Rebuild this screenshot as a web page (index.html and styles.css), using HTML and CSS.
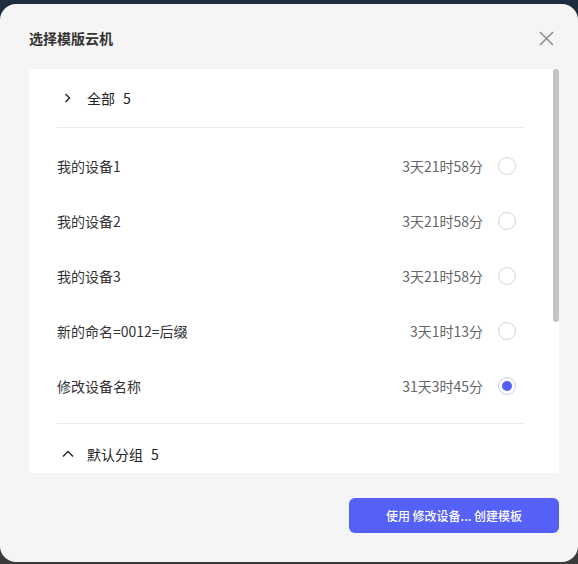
FILE: index.html
```html
<!DOCTYPE html>
<html lang="zh-CN">

<head>
    <meta charset="UTF-8">
    <meta name="viewport" content="width=device-width, initial-scale=1.0">
    <title>选择模版云机</title>
    <link rel="stylesheet" href="styles.css">
</head>

<body>
    <div class="dialog">
        <!-- Header -->
        <div class="dialog-header">
            <h2 class="dialog-title">选择模版云机</h2>
            <button class="close-btn" aria-label="关闭">
                <svg width="15" height="15" viewBox="0 0 15 15">
                    <path d="M1 1 L14 14 M14 1 L1 14" stroke="#8f8f8f" stroke-width="1.6" fill="none" />
                </svg>
            </button>
        </div>

        <!-- Device list with its scroll bar -->
        <div class="panel">
            <div class="panel-body">
                <div class="group">
                    <div class="group-head">
                        <svg class="chevron" width="16" height="16" viewBox="0 0 16 16">
                            <path d="M5.5 4 L9.5 8 L5.5 12" stroke="#222" stroke-width="1.4" fill="none" />
                        </svg>
                        <span class="group-name">全部</span>
                        <span class="group-count">5</span>
                    </div>
                    <div class="device-list">
                        <div class="device">
                            <span class="device-name">我的设备1</span>
                            <span class="device-time">3天21时58分</span>
                            <span class="radio"></span>
                        </div>
                        <div class="device">
                            <span class="device-name">我的设备2</span>
                            <span class="device-time">3天21时58分</span>
                            <span class="radio"></span>
                        </div>
                        <div class="device">
                            <span class="device-name">我的设备3</span>
                            <span class="device-time">3天21时58分</span>
                            <span class="radio"></span>
                        </div>
                        <div class="device">
                            <span class="device-name">新的命名=0012=后缀</span>
                            <span class="device-time">3天1时13分</span>
                            <span class="radio"></span>
                        </div>
                        <div class="device">
                            <span class="device-name">修改设备名称</span>
                            <span class="device-time">31天3时45分</span>
                            <span class="radio checked"></span>
                        </div>
                    </div>
                </div>

                <div class="group">
                    <div class="group-head">
                        <svg class="chevron" width="16" height="16" viewBox="0 0 16 16">
                            <path d="M3 10.5 L8 5.5 L13 10.5" stroke="#222" stroke-width="1.4" fill="none" />
                        </svg>
                        <span class="group-name">默认分组</span>
                        <span class="group-count">5</span>
                    </div>
                </div>
            </div>
            <div class="scrollbar">
                <div class="scroll-thumb"></div>
            </div>
        </div>

        <!-- Footer -->
        <div class="dialog-footer">
            <button class="primary-btn">使用 修改设备... 创建模板</button>
        </div>
    </div>
</body>

</html>
```

FILE: styles.css
```css
/* Modal for picking a template cloud phone */
body {
    margin: 0;
    height: 564px;
    overflow: hidden;
    background: linear-gradient(180deg, #1d2c3e 0%, #2b3038 60%, #3a3a3a 100%);
    font-family: "Noto Sans CJK SC", "Noto Sans", sans-serif;
    color: #333;
}

.dialog {
    margin-top: 4px;
    width: 578px;
    height: 558px;
    border-radius: 16px;
    background: #f5f5f5;
    display: flex;
    flex-direction: column;
}

.dialog-header {
    height: 65px;
    padding: 3px 24px 0 29px;
    box-sizing: border-box;
    display: flex;
    align-items: center;
    justify-content: space-between;
}

.dialog-title {
    margin: 0;
    font-size: 14px;
    font-weight: 600;
    color: #333;
}

.close-btn {
    border: none;
    background: none;
    padding: 0;
    width: 15px;
    height: 15px;
    cursor: pointer;
}

.panel {
    margin: 0 19px 0 29px;
    height: 404px;
    background: #fff;
    display: flex;
}

.panel-body {
    flex: 1;
    overflow: hidden;
}

.scrollbar {
    width: 6px;
}

.scroll-thumb {
    height: 253px;
    background: #c4c4c4;
    border-radius: 3px;
}

.group {
    padding: 0 28px;
}

.group-head {
    height: 58px;
    display: flex;
    align-items: center;
    font-size: 14px;
    color: #222;
    border-bottom: 1px solid #ebebeb;
}

.group + .group .group-head {
    height: 60px;
    border-bottom: none;
}

.chevron {
    margin-left: 3px;
    margin-right: 11px;
}

.group-count {
    margin-left: 8px;
}

.device-list {
    padding: 10px 0;
    border-bottom: 1px solid #ebebeb;
}

.device {
    height: 55px;
    display: flex;
    align-items: center;
    font-size: 14px;
    padding-right: 9px;
}

.device-name {
    flex: 1;
}

.device-time {
    color: #666;
    margin-right: 15px;
}

.radio {
    width: 18px;
    height: 18px;
    box-sizing: border-box;
    border: 1px solid #d6d6d6;
    border-radius: 50%;
    display: flex;
    align-items: center;
    justify-content: center;
}

.radio.checked {
    border-color: #c8cdf8;
}

.radio.checked::after {
    content: "";
    width: 10px;
    height: 10px;
    border-radius: 50%;
    background: #5561f6;
}

.dialog-footer {
    padding: 25px 19px 0 0;
    display: flex;
    justify-content: flex-end;
}

.primary-btn {
    width: 210px;
    height: 35px;
    border: none;
    border-radius: 6px;
    background: #5561f6;
    color: #fff;
    font-family: inherit;
    font-size: 12px;
    font-weight: 500;
    cursor: pointer;
}
```
